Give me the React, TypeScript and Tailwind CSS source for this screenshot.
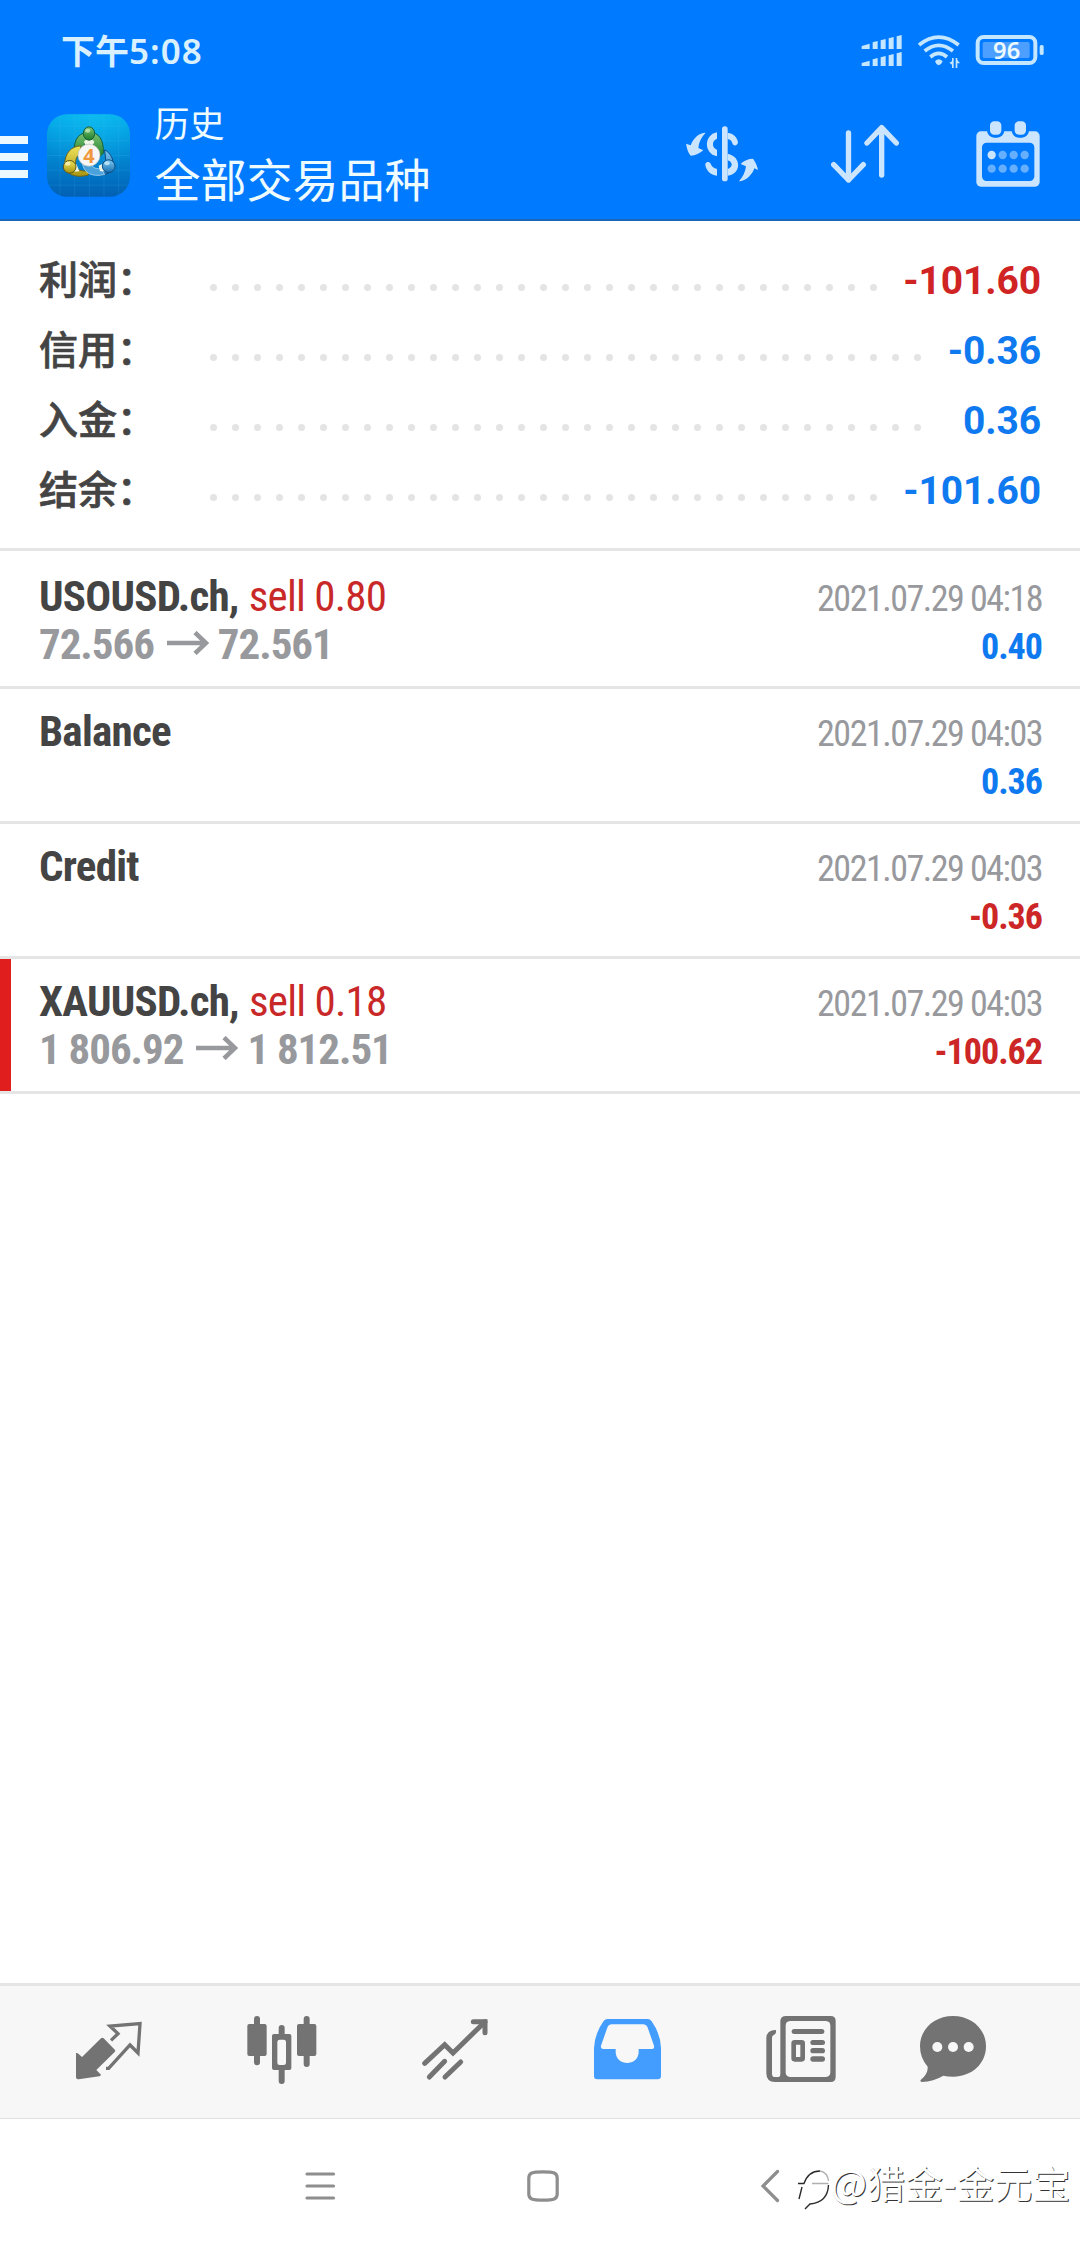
import type { ReactNode } from 'react';

interface SummaryRow {
  label: string;
  value: string;
  negative?: boolean;
  dots: number;
}

interface Deal {
  id: number;
  title: string;
  side?: string;
  open?: string;
  close?: string;
  time: string;
  profit: string;
  flagged?: boolean;
}

const SUMMARY: SummaryRow[] = [
  { label: '利润：', value: '-101.60', negative: true, dots: 31 },
  { label: '信用：', value: '-0.36', dots: 33 },
  { label: '入金：', value: '0.36', dots: 33 },
  { label: '结余：', value: '-101.60', dots: 31 }
];

const DEALS: Deal[] = [
  { id: 1, title: 'USOUSD.ch,', side: 'sell 0.80', open: '72.566', close: '72.561', time: '2021.07.29 04:18', profit: '0.40' },
  { id: 2, title: 'Balance', time: '2021.07.29 04:03', profit: '0.36' },
  { id: 3, title: 'Credit', time: '2021.07.29 04:03', profit: '-0.36' },
  { id: 4, title: 'XAUUSD.ch,', side: 'sell 0.18', open: '1 806.92', close: '1 812.51', time: '2021.07.29 04:03', profit: '-100.62', flagged: true }
];

function StatusBar() {
  return (
    <div className="flex h-[102px] items-center justify-between pl-[61px] pr-[35px] text-[#d9f1ff]">
      <div className="mb-0.5 flex items-baseline font-['Noto_Sans','Noto_Sans_CJK_SC',sans-serif] leading-none">
        <span className="font-['Noto_Sans_CJK_SC',sans-serif] text-[34px] font-bold">下午</span>
        <span className="text-[35px] font-semibold tracking-[1px]">5:08</span>
      </div>
      <svg width="184" height="34" viewBox="664 102 552 102" fill="#c4e6ff">
        {/* dual sim signal */}
        <path d="M666 138L690 131V147H666Z M699 127L714 123V147H699Z M723 121L738 117V147H723Z M747 115L762 111V147H747Z M771 109L786 105V147H771Z" />
        <path d="M666 189L690 182V198H666Z M699 178L714 174V198H699Z M723 172L738 168V198H723Z M747 166L762 162V198H747Z M771 160L786 156V198H771Z" />
        {/* wifi */}
        <g fill="none" stroke="#c4e6ff" strokeWidth="11">
          <path d="M838 135Q897 88 957 135" />
          <path d="M855 153Q897 119 940 153" />
          <path d="M872 171Q897 149 922 171" />
        </g>
        <path d="M886 184Q897 172 909 184Q907 192 897 196Q888 192 886 184Z" />
        <path d="M937 174H942V204H937V194L929 188L937 184Z M948 174H953V180L961 190H953V204H948Z" />
        {/* battery */}
        <rect x="1014" y="111" width="173" height="78" rx="18" fill="none" stroke="#c4e6ff" strokeWidth="12" />
        <rect x="1029" y="126" width="141" height="48" rx="5" fill="#4c9fff" />
        <rect x="1200" y="135" width="12" height="30" rx="5" />
        <text x="1101" y="176" textAnchor="middle" fontSize="71" className="font-['Noto_Sans',sans-serif] font-semibold" fill="#ecfaff">96</text>
      </svg>
    </div>
  );
}

function AppLogo() {
  return (
    <svg width="83" height="83" viewBox="49 41 249 248">
      <defs>
        <linearGradient id="tile" x1="0" y1="0" x2="0" y2="1">
          <stop offset="0" stopColor="#02aeea" />
          <stop offset="0.5" stopColor="#0287d2" />
          <stop offset="1" stopColor="#0160b4" />
        </linearGradient>
        <radialGradient id="glow" cx="0.55" cy="0" r="0.7">
          <stop offset="0" stopColor="#18c8f6" stopOpacity="0.5" />
          <stop offset="1" stopColor="#18c8f6" stopOpacity="0" />
        </radialGradient>
        <linearGradient id="green" x1="0" y1="0" x2="0" y2="1">
          <stop offset="0" stopColor="#7cc576" />
          <stop offset="1" stopColor="#1d7d2a" />
        </linearGradient>
        <linearGradient id="gold" x1="0" y1="0" x2="0" y2="1">
          <stop offset="0" stopColor="#f0e45c" />
          <stop offset="1" stopColor="#a89410" />
        </linearGradient>
        <linearGradient id="sky" x1="0" y1="0" x2="0" y2="1">
          <stop offset="0" stopColor="#7cc8f0" />
          <stop offset="1" stopColor="#1a72b4" />
        </linearGradient>
      </defs>
      <rect x="49" y="41" width="249" height="248" rx="60" fill="url(#tile)" />
      <rect x="49" y="41" width="249" height="248" rx="60" fill="url(#glow)" />
      <path d="M88 46V284M132 41V289M176 41V289M220 41V289M264 46V284M49 121H298M49 165H298M49 209H298M55 254H292M60 77H288" stroke="#5cc4f4" strokeOpacity="0.22" strokeWidth="2" />
      <path d="M131 150C129 112 150 95 176 95C204 95 220 118 218 158L204 172L190 140C186 116 164 116 158 140Z" fill="url(#green)" stroke="#155f3a" strokeWidth="3" />
      <path d="M150 136C120 138 104 158 102 190C103 222 134 234 172 224L178 210C158 214 140 210 136 198C132 180 138 162 152 160Z" fill="url(#gold)" stroke="#6b6420" strokeWidth="3" />
      <path d="M222 148C240 158 250 176 247 200C240 226 200 232 170 212L158 190L178 198C196 214 222 206 226 188Z" fill="url(#sky)" stroke="#0c4a80" strokeWidth="3" />
      <path d="M156 190C158 214 182 232 222 222L210 204C194 206 184 200 178 188Z" fill="#4aa2dc" stroke="#c4e6fa" strokeWidth="2" />
      <path d="M160 124C164 114 187 114 191 124L186 136H165Z M124 190L138 192L146 212L132 214Z M204 196L216 190L226 212L208 212Z" fill="#eef6e8" />
      <ellipse cx="175" cy="99" rx="17" ry="20" fill="url(#green)" stroke="#155f3a" strokeWidth="3" />
      <circle cx="117" cy="199" r="19" fill="url(#gold)" stroke="#5a561c" strokeWidth="3" />
      <circle cx="234" cy="197" r="19" fill="url(#sky)" stroke="#0c4a80" strokeWidth="3" />
      <ellipse cx="171" cy="91" rx="8" ry="6" fill="#d6f0c8" fillOpacity="0.7" />
      <ellipse cx="111" cy="190" rx="8" ry="6" fill="#fffbd0" fillOpacity="0.7" />
      <ellipse cx="229" cy="188" rx="8" ry="6" fill="#d8f2ff" fillOpacity="0.7" />
      <circle cx="175" cy="164" r="33" fill="#f6f6f6" stroke="#b9bdb4" strokeWidth="2" />
      <text x="175" y="186" textAnchor="middle" fontSize="60" className="font-['Open_Sans',sans-serif] font-bold" fill="#f0963c">4</text>
    </svg>
  );
}

function CurrencyIcon() {
  return (
    <svg width="72" height="56" viewBox="138 376 216 168" fill="#cce5ff">
      <path d="M197 396C178 396 160 412 152 434L138 429C141 447 146 458 152 465C166 465 180 458 190 449L175 442C176 425 184 410 197 396Z" />
      <path d="M231 395C191 402 191 460 231 467V447C215 441 215 420 231 414Z" />
      <path d="M196 492C196 482 208 481 212 489C215 498 222 502 231 505V525C212 522 198 510 196 492Z" />
      <rect x="246" y="377" width="17" height="165" rx="8" />
      <path d="M263 396C280 398 292 410 294 425C293 436 281 438 277 428C275 420 270 416 263 415Z" />
      <path d="M263 459C305 467 305 520 263 525V505C279 500 279 484 263 479Z" />
      <path d="M297 542C318 542 338 520 343 503L354 508C352 495 346 483 339 474C325 474 311 480 302 490L318 497C316 515 308 530 297 542Z" />
    </svg>
  );
}

function SortIcon() {
  return (
    <svg width="68" height="60" viewBox="573 374 204 180" fill="none" stroke="#cce5ff" strokeWidth="16" strokeLinecap="round" strokeLinejoin="round">
      <path d="M625.500 401V542M581 496L625.500 542L670 496" />
      <path d="M725 527V385M681 431L725 385L769 431" />
    </svg>
  );
}

function CalendarIcon() {
  return (
    <svg width="64" height="66" viewBox="1009 362 192 198">
      <rect x="1010" y="393" width="190" height="166" rx="14" fill="#cce5ff" />
      <rect x="1027" y="427" width="157" height="115" rx="14" fill="#007aff" />
      <g fill="#cce5ff" stroke="#007aff" strokeWidth="9">
        <rect x="1046.500" y="358.500" width="43" height="49" rx="17" />
        <rect x="1120.500" y="358.500" width="43" height="49" rx="17" />
      </g>
      <g fill="#66afff">
        {[1089, 1122, 1155].map((x) => (
          <circle key={x} cx={x} cy="464" r="12.500" />
        ))}
        {[1056, 1089, 1122, 1155].map((x) => (
          <circle key={x} cx={x} cy="505" r="12.500" />
        ))}
      </g>
      <circle cx="1056" cy="464" r="12.500" fill="#cce5ff" />
    </svg>
  );
}

function Header() {
  return (
    <header className="h-[221px] border-b-2 border-[#1c66b8] bg-[#007aff]">
      <StatusBar />
      <div className="flex h-[110px] items-center">
        <div className="flex w-7 flex-col gap-[9px]">
          <span className="h-2 bg-[#eaf9ff]" />
          <span className="h-2 bg-[#eaf9ff]" />
          <span className="h-2 bg-[#eaf9ff]" />
        </div>
        <div className="mb-[3px] ml-[18.500px]">
          <AppLogo />
        </div>
        <div className="ml-[25px] font-['Noto_Sans_CJK_SC',sans-serif] text-[#eefbff]">
          <div className="text-[35px] leading-10">历史</div>
          <h1 className="text-[46px] leading-[70px]">全部交易品种</h1>
        </div>
        <div className="mb-[6px] ml-auto flex items-center pr-10">
          <CurrencyIcon />
          <div className="ml-[73px]">
            <SortIcon />
          </div>
          <div className="ml-[77px]">
            <CalendarIcon />
          </div>
        </div>
      </div>
    </header>
  );
}

function Summary() {
  return (
    <section className="h-[330px] border-b-[3px] border-[#e5e5e5] pt-[21px]">
      {SUMMARY.map((row) => (
        <div key={row.label} className="flex h-[70px] items-baseline pl-[39px] pr-[39px]">
          <span className="w-[171px] font-['Noto_Sans_CJK_SC',sans-serif] text-[39px] font-medium leading-[70px] text-[#444] [-webkit-text-stroke:0.7px_#444]">
            {row.label}
          </span>
          <span className="mt-5 flex gap-[15px] self-center">
            {Array.from({ length: row.dots }, (_, i) => (
              <span key={i} className="size-[7px] rounded-full bg-[#e4e4e4]" />
            ))}
          </span>
          <span className={`ml-auto font-['Roboto',sans-serif] text-[39px] font-bold leading-10 tracking-[-0.1px] ${row.negative ? 'text-[#d02424]' : 'text-[#0f7af0]'}`}>
            {row.value}
          </span>
        </div>
      ))}
    </section>
  );
}

function PriceArrow() {
  return (
    <svg width="42" height="24" viewBox="0 0 42 24" fill="none" stroke="#98999d" strokeWidth="4.500" className="mb-0.5 ml-[13px] mr-[9px]">
      <path d="M0 12H39M28 1.500L39 12L28 22.500" />
    </svg>
  );
}

function DealRow({ deal, first }: { deal: Deal; first: boolean }) {
  const loss = deal.profit.startsWith('-');

  return (
    <li
      className={`relative flex justify-between border-b-[3px] border-[#e5e5e5] pl-[39px] pr-[38px] font-['Roboto_Condensed','Roboto',sans-serif] leading-[48px] ${
        first ? 'h-[138px] pt-[21px]' : 'h-[135px] pt-[18px]'
      }`}
    >
      {deal.flagged && <span className="absolute inset-y-0 left-0 w-[11px] bg-[#e01e1e]" />}
      <div className="text-[43px]">
        <div className="flex gap-[10px] tracking-[-0.75px]">
          <span className="font-bold text-[#444]">{deal.title}</span>
          {deal.side && <span className="text-[#c92828]">{deal.side}</span>}
        </div>
        {deal.open && (
          <div className="flex items-center font-bold tracking-[-1.050px] text-[#98999d]">
            {deal.open}
            <PriceArrow />
            {deal.close}
          </div>
        )}
      </div>
      <div className="pt-[3px] text-right text-[36px]">
        <div className="tracking-[-1.500px] text-[#98999d]">{deal.time}</div>
        <div className={`font-bold tracking-[-1px] ${loss ? 'text-[#cc2626]' : 'text-[#0f7af0]'}`}>{deal.profit}</div>
      </div>
    </li>
  );
}

function TabIcon({ viewBox, className = '', children }: { viewBox: string; className?: string; children: ReactNode }) {
  return (
    <svg width="70" height="72" viewBox={viewBox} className={className} fill="#737373">
      {children}
    </svg>
  );
}

function TabBar() {
  return (
    <nav className="flex h-[136px] gap-[103px] border-b border-t-[3px] border-b-[#e0e0e0] border-t-[#e5e5e5] bg-[#f7f7f7] pl-[74px] pt-7">
      {/* quotes */}
      <TabIcon viewBox="42 42 210 216">
        <path d="M123 115Q127 112 131 115L165 150Q167 153 164 156L109 210L123 224Q122 228 118 229L56 238Q48 238 48 230V159Q52 158 55 161L66 171Z" />
        <path d="M153 121L174 101L150 78L240 71L234 159L210 135L146 205H138" fill="none" stroke="#737373" strokeWidth="10" />
      </TabIcon>
      {/* charts */}
      <TabIcon viewBox="559 42 210 216">
        <rect x="580" y="48" width="18" height="148" rx="9" />
        <rect x="560" y="72" width="58" height="96" rx="6" />
        <rect x="729" y="48" width="18" height="153" rx="9" />
        <rect x="709" y="72" width="58" height="96" rx="6" />
        <rect x="654" y="75" width="18" height="177" rx="9" />
        <rect x="634" y="102" width="58" height="108" rx="6" />
        <rect x="650" y="119" width="26" height="76" rx="7" fill="#f7f7f7" />
      </TabIcon>
      {/* trade */}
      <TabIcon viewBox="1078 42 210 216">
        <g fill="none" stroke="#737373" strokeWidth="15" strokeLinecap="round">
          <path d="M1092 190L1152 134L1177 159L1273 65" strokeLinejoin="miter" />
          <path d="M1238 65H1273V98" />
          <path d="M1106 231L1152 184" />
          <path d="M1153 231L1200 186" />
        </g>
      </TabIcon>
      {/* history */}
      <TabIcon viewBox="9 42 210 216">
        <path
          fill="#429dff"
          fillRule="evenodd"
          d="M53 57H173Q180 57 185 64Q213 105 213 145V228Q213 238 203 238H22Q12 238 12 228V145Q14 100 41 63Q45 57 53 57Z M64 73Q56 74 53 80L33 137Q31 147 39 147H77V156C78 200 145 200 146 156V147H184Q194 147 192 137L172 80Q169 74 160 73Z"
        />
      </TabIcon>
      {/* news */}
      <TabIcon viewBox="528 42 210 216">
        <path
          fillRule="evenodd"
          d="M588 48H722Q737 48 737 63V230Q737 246 722 246H555Q529 246 529 220V114Q530 90 558 90Q559 104 551 105Q546 107 546 114V221Q546 231 555 231H567Q571 229 571 222V63Q572 48 588 48Z M600 63Q587 64 587 77V217Q587 230 600 231H708Q721 230 721 217V77Q721 64 708 63Z"
        />
        <rect x="605" y="87" width="98" height="15" rx="7.500" />
        <rect x="611" y="127" width="27" height="51" rx="3" fill="none" stroke="#737373" strokeWidth="14" />
        <rect x="661" y="120" width="44" height="15" rx="7.500" />
        <rect x="661" y="144" width="44" height="16" rx="8" />
        <rect x="661" y="169" width="44" height="16" rx="8" />
      </TabIcon>
      {/* chat */}
      <TabIcon viewBox="987 42 210 216" className="-ml-5">
        <path d="M1089 48C1146 48 1188 88 1188 139C1188 192 1145 230 1090 230Q1072 230 1060 227Q1030 245 996 246Q989 244 992 240Q1015 222 1013 200Q990 174 990 139C990 88 1032 48 1089 48Z" />
        <g fill="#f7f7f7">
          <circle cx="1042" cy="141" r="15" />
          <circle cx="1089" cy="141" r="15" />
          <circle cx="1136" cy="141" r="15" />
        </g>
      </TabIcon>
    </nav>
  );
}

function SystemNav() {
  return (
    <div className="flex h-[129px] items-center pl-[304px] pt-[5px]">
      <svg width="32" height="36" viewBox="0 0 32 36" stroke="#8e8e8e" strokeWidth="3.200" strokeLinecap="round">
        <path d="M3 6H29.500M3 18H29.500M3 30H29.500" />
      </svg>
      <svg width="32" height="32" viewBox="0 0 32 32" fill="none" stroke="#8e8e8e" strokeWidth="3.200" className="ml-[191px]">
        <path d="M16 1.800C27 1.800 30.200 3 30.200 8V24C30.200 29 27 30.200 16 30.200S1.800 29 1.800 24V8C1.800 3 5 1.800 16 1.800Z" />
      </svg>
      <svg width="20" height="34" viewBox="0 0 20 34" fill="none" stroke="#8e8e8e" strokeWidth="3.200" strokeLinecap="round" className="ml-[201px]">
        <path d="M17.500 2.500L3 17L17.500 31.500" />
      </svg>
      <svg width="34" height="46" viewBox="0 0 34 46" fill="none" strokeWidth="1.400" className="ml-[17px] mt-2">
        <path d="M2 32L5 20M1 16.500H7C10 8 15 4 23 4M31.500 18C31 30 24 36 13 37L8 42" stroke="#2b2b2b" />
        <path d="M23 4C28 5 31 9 31.500 14M15 16.500H31.500" stroke="#b0b0b0" />
      </svg>
      <span className="mb-2 whitespace-nowrap font-['Noto_Sans_CJK_SC',sans-serif] text-[38px] leading-none text-white [text-shadow:1px_1px_0_#333]">
        @猎金-金元宝
      </span>
    </div>
  );
}

export default function App() {
  return (
    <div className="flex h-[2248px] w-[1080px] flex-col overflow-hidden bg-white">
      <Header />
      <Summary />
      <ul className="flex-1">
        {DEALS.map((deal, idx) => (
          <DealRow key={deal.id} deal={deal} first={idx === 0} />
        ))}
      </ul>
      <TabBar />
      <SystemNav />
    </div>
  );
}
